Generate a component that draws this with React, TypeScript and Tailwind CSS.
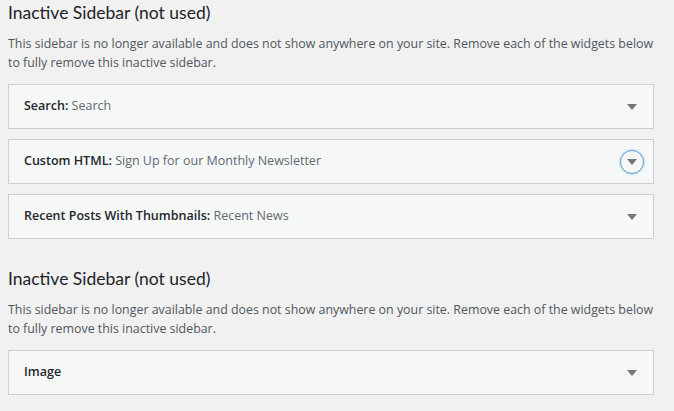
const widgets1 = [
  { name: "Search", title: "Search" },
  { name: "Custom HTML", title: "Sign Up for our Monthly Newsletter", focused: true },
  { name: "Recent Posts With Thumbnails", title: "Recent News" },
]

const widgets2 = [{ name: "Image", title: "" }]

function Arrow({ focused }: { focused?: boolean }) {
  return (
    <span
      className={`flex h-[24px] w-[24px] items-center justify-center rounded-full ${
        focused ? "border border-[#5b9dd9] shadow-[0_0_2px_rgba(30,140,190,0.6)]" : ""
      }`}
    >
      <svg width="10" height="6" viewBox="0 0 10 6" className="mt-[1px]">
        <path d="M0 0h10L5 6z" fill="#72777c" />
      </svg>
    </span>
  )
}

function WidgetRow({ name, title, focused }: { name: string; title: string; focused?: boolean }) {
  return (
    <div className="flex h-[45px] items-center justify-between border border-[#ccd0d4] bg-[#f6f7f7] pl-[15px] pr-[9px]">
      <div className="text-[12.5px] text-[#23282d]">
        <span className="font-semibold">{name}</span>
        {title && (
          <>
            <span className="font-semibold">:</span>{" "}
            <span className="text-[#606a73]">{title}</span>
          </>
        )}
      </div>
      <Arrow focused={focused} />
    </div>
  )
}

function InactiveSidebar({ widgets }: { widgets: { name: string; title: string; focused?: boolean }[] }) {
  return (
    <div>
      <h2 className="font-['Lato',sans-serif] text-[17.5px] font-normal leading-[22px] text-[#1d2327]">
        Inactive Sidebar (not used)
      </h2>
      <p className="mt-[10px] text-[12.4px] leading-[19px] text-[#50575e]">
        This sidebar is no longer available and does not show anywhere on your site. Remove each of the widgets below
        to fully remove this inactive sidebar.
      </p>
      <div className="mt-[12px] space-y-[10px]">
        {widgets.map((w) => (
          <WidgetRow key={w.name} {...w} />
        ))}
      </div>
    </div>
  )
}

export default function App() {
  return (
    <div
      className="min-h-[411px] bg-[#f1f1f1] pl-[8px] pr-[20px] pt-[2px]"
      style={{ fontFamily: '"Open Sans", "Noto Sans", sans-serif' }}
    >
      <InactiveSidebar widgets={widgets1} />
      <div className="mt-[29px]">
        <InactiveSidebar widgets={widgets2} />
      </div>
    </div>
  )
}
